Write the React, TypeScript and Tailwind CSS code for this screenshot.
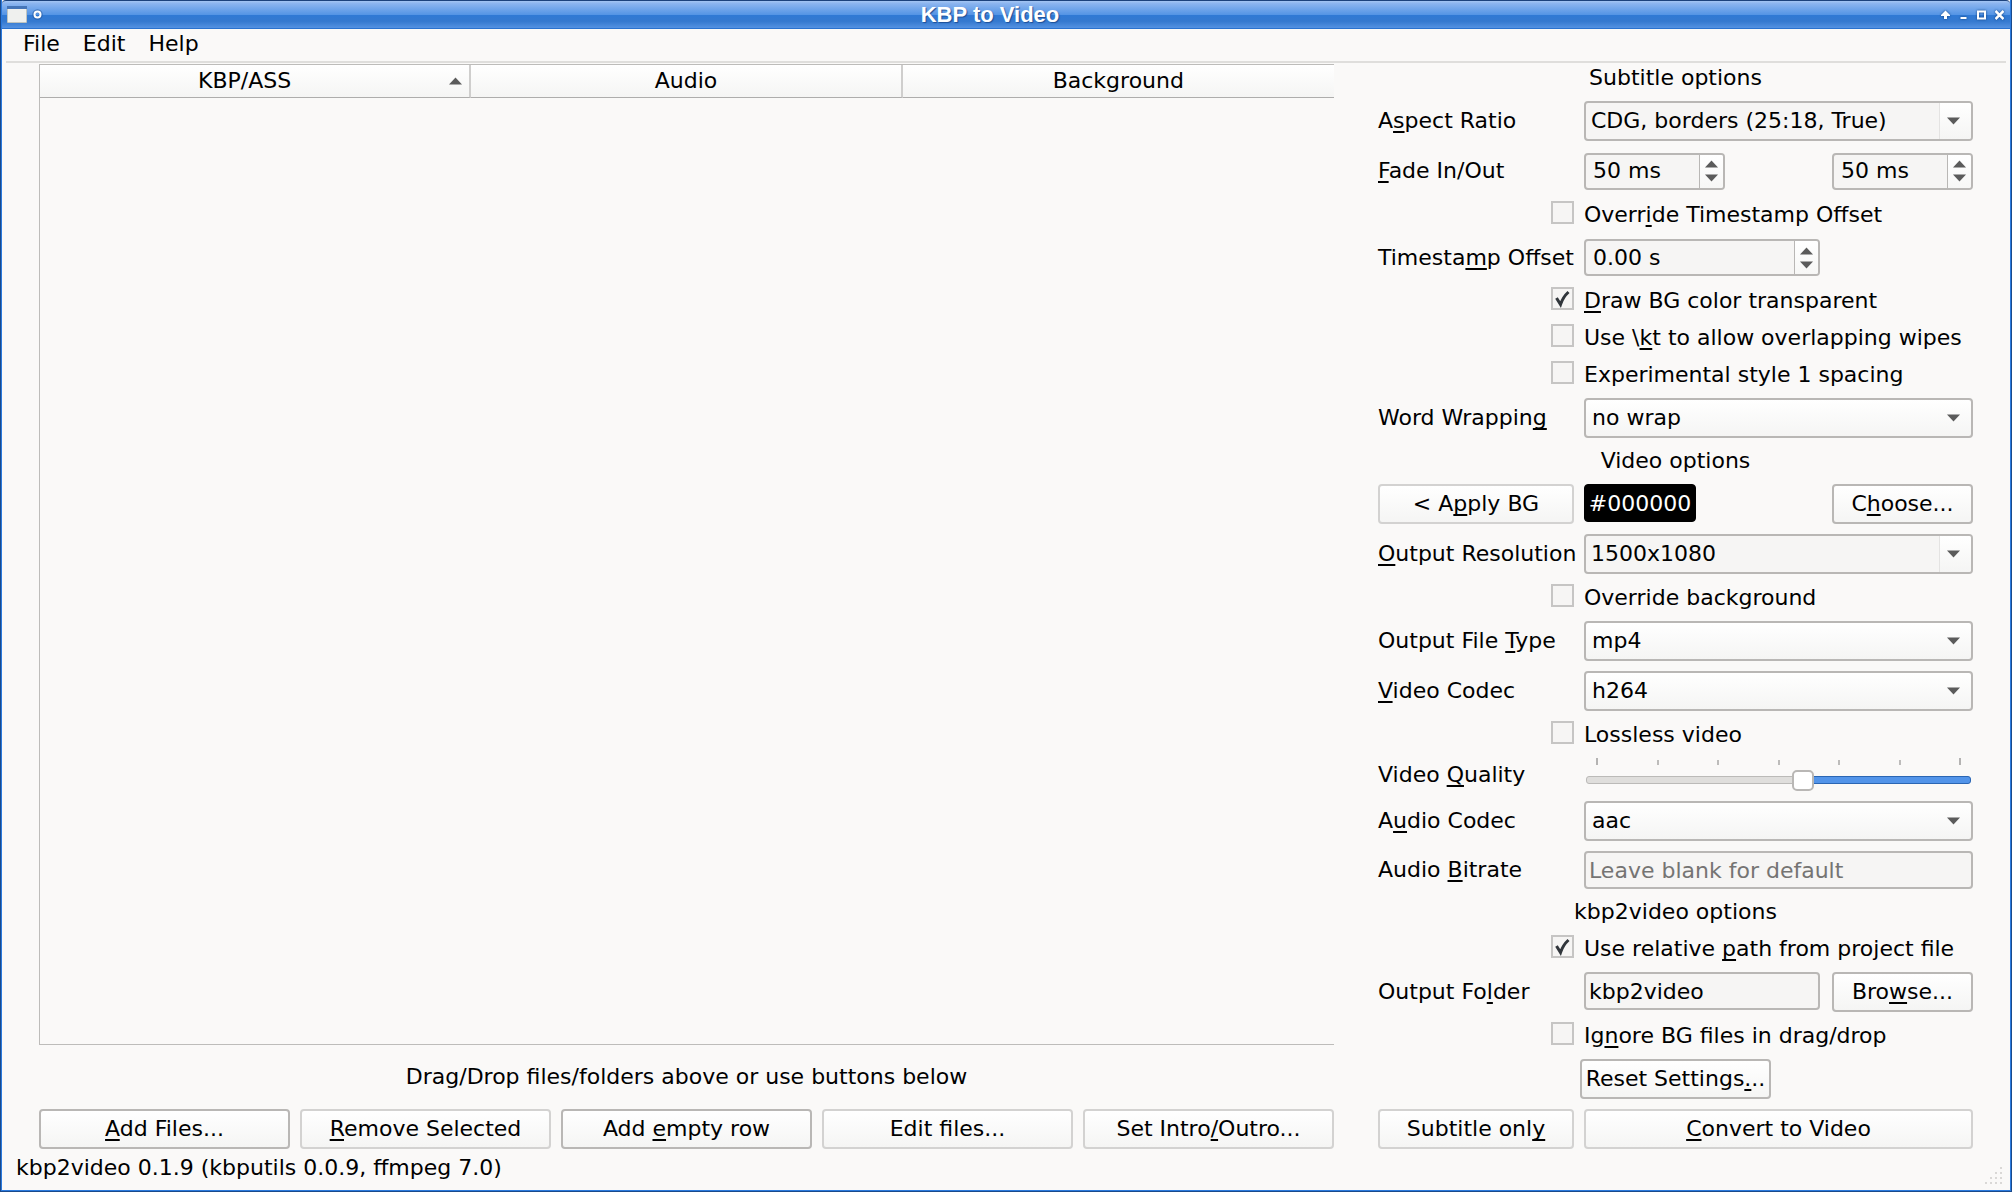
import { useState, type ReactNode } from "react";

const FRAME =
  "rounded-[4px] border-2 border-[#b9b7b5] text-[22px] text-black outline-none";
const RAISED = "bg-linear-to-b from-white to-[#f5f5f4]";

/** Renders text with the character after "&" underlined as the mnemonic. */
function Mnemonic({ text }: { text: string }) {
  const at = text.indexOf("&");
  if (at < 0) return <>{text}</>;
  return (
    <>
      {text.slice(0, at)}
      <span className="underline decoration-2 underline-offset-[3px] [text-decoration-skip-ink:none]">
        {text[at + 1]}
      </span>
      {text.slice(at + 2)}
    </>
  );
}

function Triangle({ up = false, className = "" }: { up?: boolean; className?: string }) {
  return (
    <svg viewBox="0 0 13 8" className={`h-2 w-[13px] ${className}`} aria-hidden="true">
      <path d={up ? "M0 7.5 6.5 0.5 13 7.5Z" : "M0 0.5 6.5 7.5 13 0.5Z"} fill="#5b5b5b" />
    </svg>
  );
}

function PushButton({
  text,
  disabled = false,
  className = "",
}: {
  text: string;
  disabled?: boolean;
  className?: string;
}) {
  return (
    <button
      type="button"
      className={`h-10 rounded-[4px] border-2 text-[22px] whitespace-nowrap text-black ${RAISED} ${
        disabled ? "border-[#d3d2d1]" : "border-[#b9b7b5]"
      } ${className}`}
    >
      <Mnemonic text={text} />
    </button>
  );
}

function Field({
  label,
  id,
  className = "",
  children,
}: {
  label: string;
  id: string;
  className?: string;
  children: ReactNode;
}) {
  return (
    <div className={`flex items-center gap-2.5 ${className}`}>
      <label htmlFor={id} className="w-[196px] shrink-0 whitespace-nowrap">
        <Mnemonic text={label} />
      </label>
      <div className="flex min-w-0 flex-1 items-center justify-between gap-2.5">{children}</div>
    </div>
  );
}

function Combo({
  id,
  options,
  editable = false,
}: {
  id: string;
  options: string[];
  editable?: boolean;
}) {
  return (
    <div className="relative h-10 flex-1">
      <select
        id={id}
        className={`h-full w-full appearance-none ${FRAME} ${
          editable ? "bg-[#f6f5f4] pl-[5px]" : `${RAISED} pl-1.5`
        }`}
      >
        {options.map((option) => (
          <option key={option}>{option}</option>
        ))}
      </select>
      <div
        className={`pointer-events-none absolute inset-y-0.5 right-0.5 flex w-8 items-center justify-center pr-1 ${
          editable ? `rounded-r-[2px] border-l border-[#e4e3e2] ${RAISED}` : ""
        }`}
      >
        <Triangle />
      </div>
    </div>
  );
}

function Spin({ id, label, value, wide = false }: { id: string; label: string; value: string; wide?: boolean }) {
  return (
    <div className={`flex h-[37px] bg-[#f6f5f4] ${FRAME} ${wide ? "w-[236px]" : "w-[141px]"}`}>
      <input
        id={id}
        aria-label={label}
        defaultValue={value}
        className="min-w-0 flex-1 bg-transparent pl-[7px] outline-none"
      />
      <div className="flex w-6 flex-col items-center justify-center gap-0.5 rounded-r-[2px] border-l border-[#b9b7b5] bg-linear-to-b from-white to-[#f7f7f6]">
        <button type="button" aria-label={`Increase ${label}`} className="flex h-3 items-center">
          <Triangle up />
        </button>
        <button type="button" aria-label={`Decrease ${label}`} className="flex h-3 items-center">
          <Triangle />
        </button>
      </div>
    </div>
  );
}

function Check({ label, checked = false }: { label: string; checked?: boolean }) {
  return (
    <label className="flex h-[27px] items-start gap-2.5 pl-[173px] whitespace-nowrap">
      <span className="relative size-[23px] shrink-0">
        <input
          type="checkbox"
          defaultChecked={checked}
          className="peer block size-full appearance-none border-2 border-[#c6c5c4] bg-[#f6f5f4]"
        />
        <svg
          viewBox="0 0 23 23"
          className="pointer-events-none absolute inset-0 hidden size-full peer-checked:block"
          aria-hidden="true"
        >
          <path d="M5.5 11 9.5 17.5Q12 10 17.5 5" fill="none" stroke="#31363b" strokeWidth="3" />
        </svg>
      </span>
      <span className="leading-[27px]">
        <Mnemonic text={label} />
      </span>
    </label>
  );
}

function SectionTitle({ children }: { children: ReactNode }) {
  return <h2 className="text-center">{children}</h2>;
}

function QualitySlider() {
  const [value, setValue] = useState(17);
  const share = `${(value / 30) * 100}%`;
  return (
    <div className="flex h-[33px] w-full flex-col px-0.5">
      <div className="flex h-[11px] items-start justify-between px-2.5" aria-hidden="true">
        {[7, 5, 5, 5, 5, 5, 7].map((size, i) => (
          <span key={i} className={size === 7 ? "h-[7px] w-0.5 bg-[#b4b3b2]" : "mt-0.5 h-[5px] w-0.5 bg-[#bdbcbb]"} />
        ))}
      </div>
      <div className="relative flex h-[22px] items-center">
        <div className="absolute inset-x-0 top-[7px] flex h-2">
          <div className="rounded-l-[3px] border border-[#bbbab8] bg-[#dfdedc]" style={{ width: share }} />
          <div className="flex-1 rounded-r-[3px] border border-[#2b66b3] bg-[#5294e9]" />
        </div>
        <input
          id="quality"
          type="range"
          min={0}
          max={30}
          value={value}
          onChange={(e) => setValue(Number(e.target.value))}
          className="relative h-[22px] w-full appearance-none bg-transparent [&::-webkit-slider-thumb]:h-[21px] [&::-webkit-slider-thumb]:w-[22px] [&::-webkit-slider-thumb]:appearance-none [&::-webkit-slider-thumb]:rounded-[5px] [&::-webkit-slider-thumb]:border-2 [&::-webkit-slider-thumb]:border-[#b9b7b5] [&::-webkit-slider-thumb]:bg-white"
        />
      </div>
    </div>
  );
}

function TitleBar() {
  return (
    <header className="relative flex h-[29px] items-center justify-center rounded-t-[4px] border-t border-b border-t-[#1c427c] border-b-[#2a72cf] bg-[linear-gradient(to_bottom,#a4c5f3_0%,#8ab4ef_10%,#5595e5_50%,#2f79d5_52%,#3579cf_75%,#5492e2_100%)]">
      <div className="absolute left-[5px] flex items-center gap-1.5">
        <svg viewBox="0 0 20 17" className="h-[17px] w-5" aria-hidden="true">
          <rect width="20" height="17" rx="1" fill="#bfc4c0" />
          <rect x="1" y="1" width="18" height="15" fill="#eff0ee" />
          <rect width="20" height="3" fill="#4575b8" />
        </svg>
        <svg viewBox="0 0 9 9" className="size-[9px] overflow-visible" aria-hidden="true">
          <circle cx="4.5" cy="4.5" r="3.5" fill="none" stroke="#1d4f96" strokeWidth="3.5" opacity="0.5" />
          <circle cx="4.5" cy="4.5" r="3" fill="none" stroke="#fff" strokeWidth="2" />
        </svg>
      </div>
      <h1 className="pr-8 font-['Liberation_Sans',sans-serif] text-[22px] font-bold text-white [text-shadow:1px_1px_1px_#1d4f96]">
        KBP to Video
      </h1>
      <div className="absolute right-[6px] flex items-center gap-[9px] text-white [filter:drop-shadow(0_0_1px_#12417f)]">
        <button type="button" aria-label="Shade">
          <svg viewBox="0 0 9 10" className="block h-2.5 w-[9px]" aria-hidden="true">
            <path d="M4.5 9V3" stroke="currentColor" strokeWidth="3" />
            <path d="M4.5 0.5 9 5V6H0V5Z" fill="currentColor" />
          </svg>
        </button>
        <button type="button" aria-label="Minimize">
          <svg viewBox="0 0 9 10" className="block h-2.5 w-[9px]" aria-hidden="true">
            <path d="M1.5 8H7.5" stroke="currentColor" strokeWidth="2" />
          </svg>
        </button>
        <button type="button" aria-label="Maximize">
          <svg viewBox="0 0 9 10" className="block h-2.5 w-[9px]" aria-hidden="true">
            <path d="M1 1.5H8V8.5H1Z" fill="none" stroke="currentColor" strokeWidth="2" />
          </svg>
        </button>
        <button type="button" aria-label="Close">
          <svg viewBox="0 0 9 10" className="block h-2.5 w-[9px]" aria-hidden="true">
            <path d="M0.5 1 8.5 9M8.5 1 0.5 9" stroke="currentColor" strokeWidth="2.5" />
          </svg>
        </button>
      </div>
    </header>
  );
}

function FileTable() {
  return (
    <div className="flex-1 border-t border-b border-l border-[#bdbcba]">
      <table className="w-full table-fixed border-separate border-spacing-0">
        <thead>
          <tr>
            {["KBP/ASS", "Audio", "Background"].map((name, i) => (
              <th
                key={name}
                className={`relative h-[33px] border-b border-b-[#aeadac] p-0 text-center font-normal ${RAISED} ${
                  i < 2 ? "border-r-2 border-r-[#cfcecd]" : ""
                } ${i === 0 ? "pr-5" : ""}`}
              >
                {name}
                {i === 0 && <Triangle up className="absolute top-3 right-[7px]" />}
              </th>
            ))}
          </tr>
        </thead>
      </table>
    </div>
  );
}

export default function App() {
  return (
    <div className="flex min-h-screen flex-col bg-[#1a4a8c] px-px pb-px font-['DejaVu_Sans',sans-serif] text-[22px] leading-[26px] text-black">
      <div className="flex flex-1 flex-col border-x border-b border-[#2b7ade] bg-[#faf9f8]">
        <TitleBar />
        <nav className="mx-1 flex h-[34px] gap-[23px] border-b-2 border-[#dfdedc] pl-[17px]">
          {["File", "Edit", "Help"].map((item) => (
            <button key={item} type="button" className="pb-0.5">
              {item}
            </button>
          ))}
        </nav>
        <main className="flex flex-1 gap-11 px-[37px] pt-px">
          <section className="flex min-w-0 flex-1 flex-col">
            <FileTable />
            <p className="flex h-16 items-center justify-center">
              Drag/Drop files/folders above or use buttons below
            </p>
            <div className="flex gap-2.5">
              <PushButton className="flex-1" text="&Add Files..." />
              <PushButton className="flex-1" disabled text="&Remove Selected" />
              <PushButton className="flex-1" text="Add &empty row" />
              <PushButton className="flex-1" disabled text="Edit files..." />
              <PushButton className="flex-1" disabled text="Set Intro&/Outro..." />
            </div>
          </section>

          <form className="flex w-[595px] shrink-0 flex-col gap-2.5 pt-px">
            <SectionTitle>Subtitle options</SectionTitle>
            <Field label="A&spect Ratio" id="aspect">
              <Combo id="aspect" editable options={["CDG, borders (25:18, True)", "CDG, no borders (48:35, True)"]} />
            </Field>
            <Field label="&Fade In/Out" id="fade-in" className="h-10">
              <Spin id="fade-in" label="Fade in" value="50 ms" />
              <Spin id="fade-out" label="Fade out" value="50 ms" />
            </Field>
            <Check label="Overr&ide Timestamp Offset" />
            <Field label="Timesta&mp Offset" id="offset" className="h-[39px]">
              <Spin id="offset" label="Timestamp offset" value="0.00 s" wide />
            </Field>
            <Check label="&Draw BG color transparent" checked />
            <Check label="Use \&kt to allow overlapping wipes" />
            <Check label="Experimental style 1 spacing" />
            <Field label="Word Wrappin&g" id="wrap">
              <Combo id="wrap" options={["no wrap", "smart wrap"]} />
            </Field>
            <SectionTitle>Video options</SectionTitle>
            <div className="flex gap-2.5">
              <PushButton className="w-[196px]" disabled text="< A&pply BG" />
              <div className="flex flex-1 items-start justify-between">
                <input
                  aria-label="Background color"
                  defaultValue="#000000"
                  className="h-[38px] w-[112px] rounded-[4px] border border-black bg-black text-center text-[22px] text-white"
                />
                <PushButton className="w-[141px]" text="C&hoose..." />
              </div>
            </div>
            <Field label="&Output Resolution" id="resolution">
              <Combo id="resolution" editable options={["1500x1080", "1000x720"]} />
            </Field>
            <Check label="Override background" />
            <Field label="Output File &Type" id="filetype">
              <Combo id="filetype" options={["mp4", "mkv", "webm"]} />
            </Field>
            <Field label="&Video Codec" id="vcodec">
              <Combo id="vcodec" options={["h264", "h265", "vp9"]} />
            </Field>
            <Check label="Lossless video" />
            <div className="flex items-center gap-2.5">
              <label htmlFor="quality" className="w-[196px] shrink-0">
                <Mnemonic text="Video &Quality" />
              </label>
              <QualitySlider />
            </div>
            <Field label="A&udio Codec" id="acodec">
              <Combo id="acodec" options={["aac", "flac", "mp3"]} />
            </Field>
            <Field label="Audio &Bitrate" id="bitrate">
              <input
                id="bitrate"
                placeholder="Leave blank for default"
                className={`h-[38px] w-full bg-[#f6f5f4] pl-[3px] placeholder:text-[#757473] ${FRAME}`}
              />
            </Field>
            <SectionTitle>kbp2video options</SectionTitle>
            <Check label="Use relative &path from project file" checked />
            <Field label="Output Fo&lder" id="folder">
              <input
                id="folder"
                defaultValue="kbp2video"
                className={`h-[38px] w-[236px] self-start bg-[#f6f5f4] pl-[3px] ${FRAME}`}
              />
              <PushButton className="w-[141px]" text="Bro&wse..." />
            </Field>
            <Check label="Ig&nore BG files in drag/drop" />
            <PushButton className="self-center px-1" text="Reset Settings&..." />
            <div className="flex gap-2.5">
              <PushButton className="w-[196px]" disabled text="Subtitle onl&y" />
              <PushButton className="flex-1" disabled text="&Convert to Video" />
            </div>
          </form>
        </main>
        <footer className="flex h-[41px] items-center justify-between pr-2 pb-1 pl-3.5">
          <span>kbp2video 0.1.9 (kbputils 0.0.9, ffmpeg 7.0)</span>
          <svg viewBox="0 0 20 20" className="size-5 self-end" aria-hidden="true">
            <path
              d="M18 2h2M13 7h2M18 7h2M8 12h2M13 12h2M18 12h2M3 17h2M8 17h2M13 17h2M18 17h2"
              stroke="#b9b7b5"
              strokeWidth="1"
            />
          </svg>
        </footer>
      </div>
    </div>
  );
}
